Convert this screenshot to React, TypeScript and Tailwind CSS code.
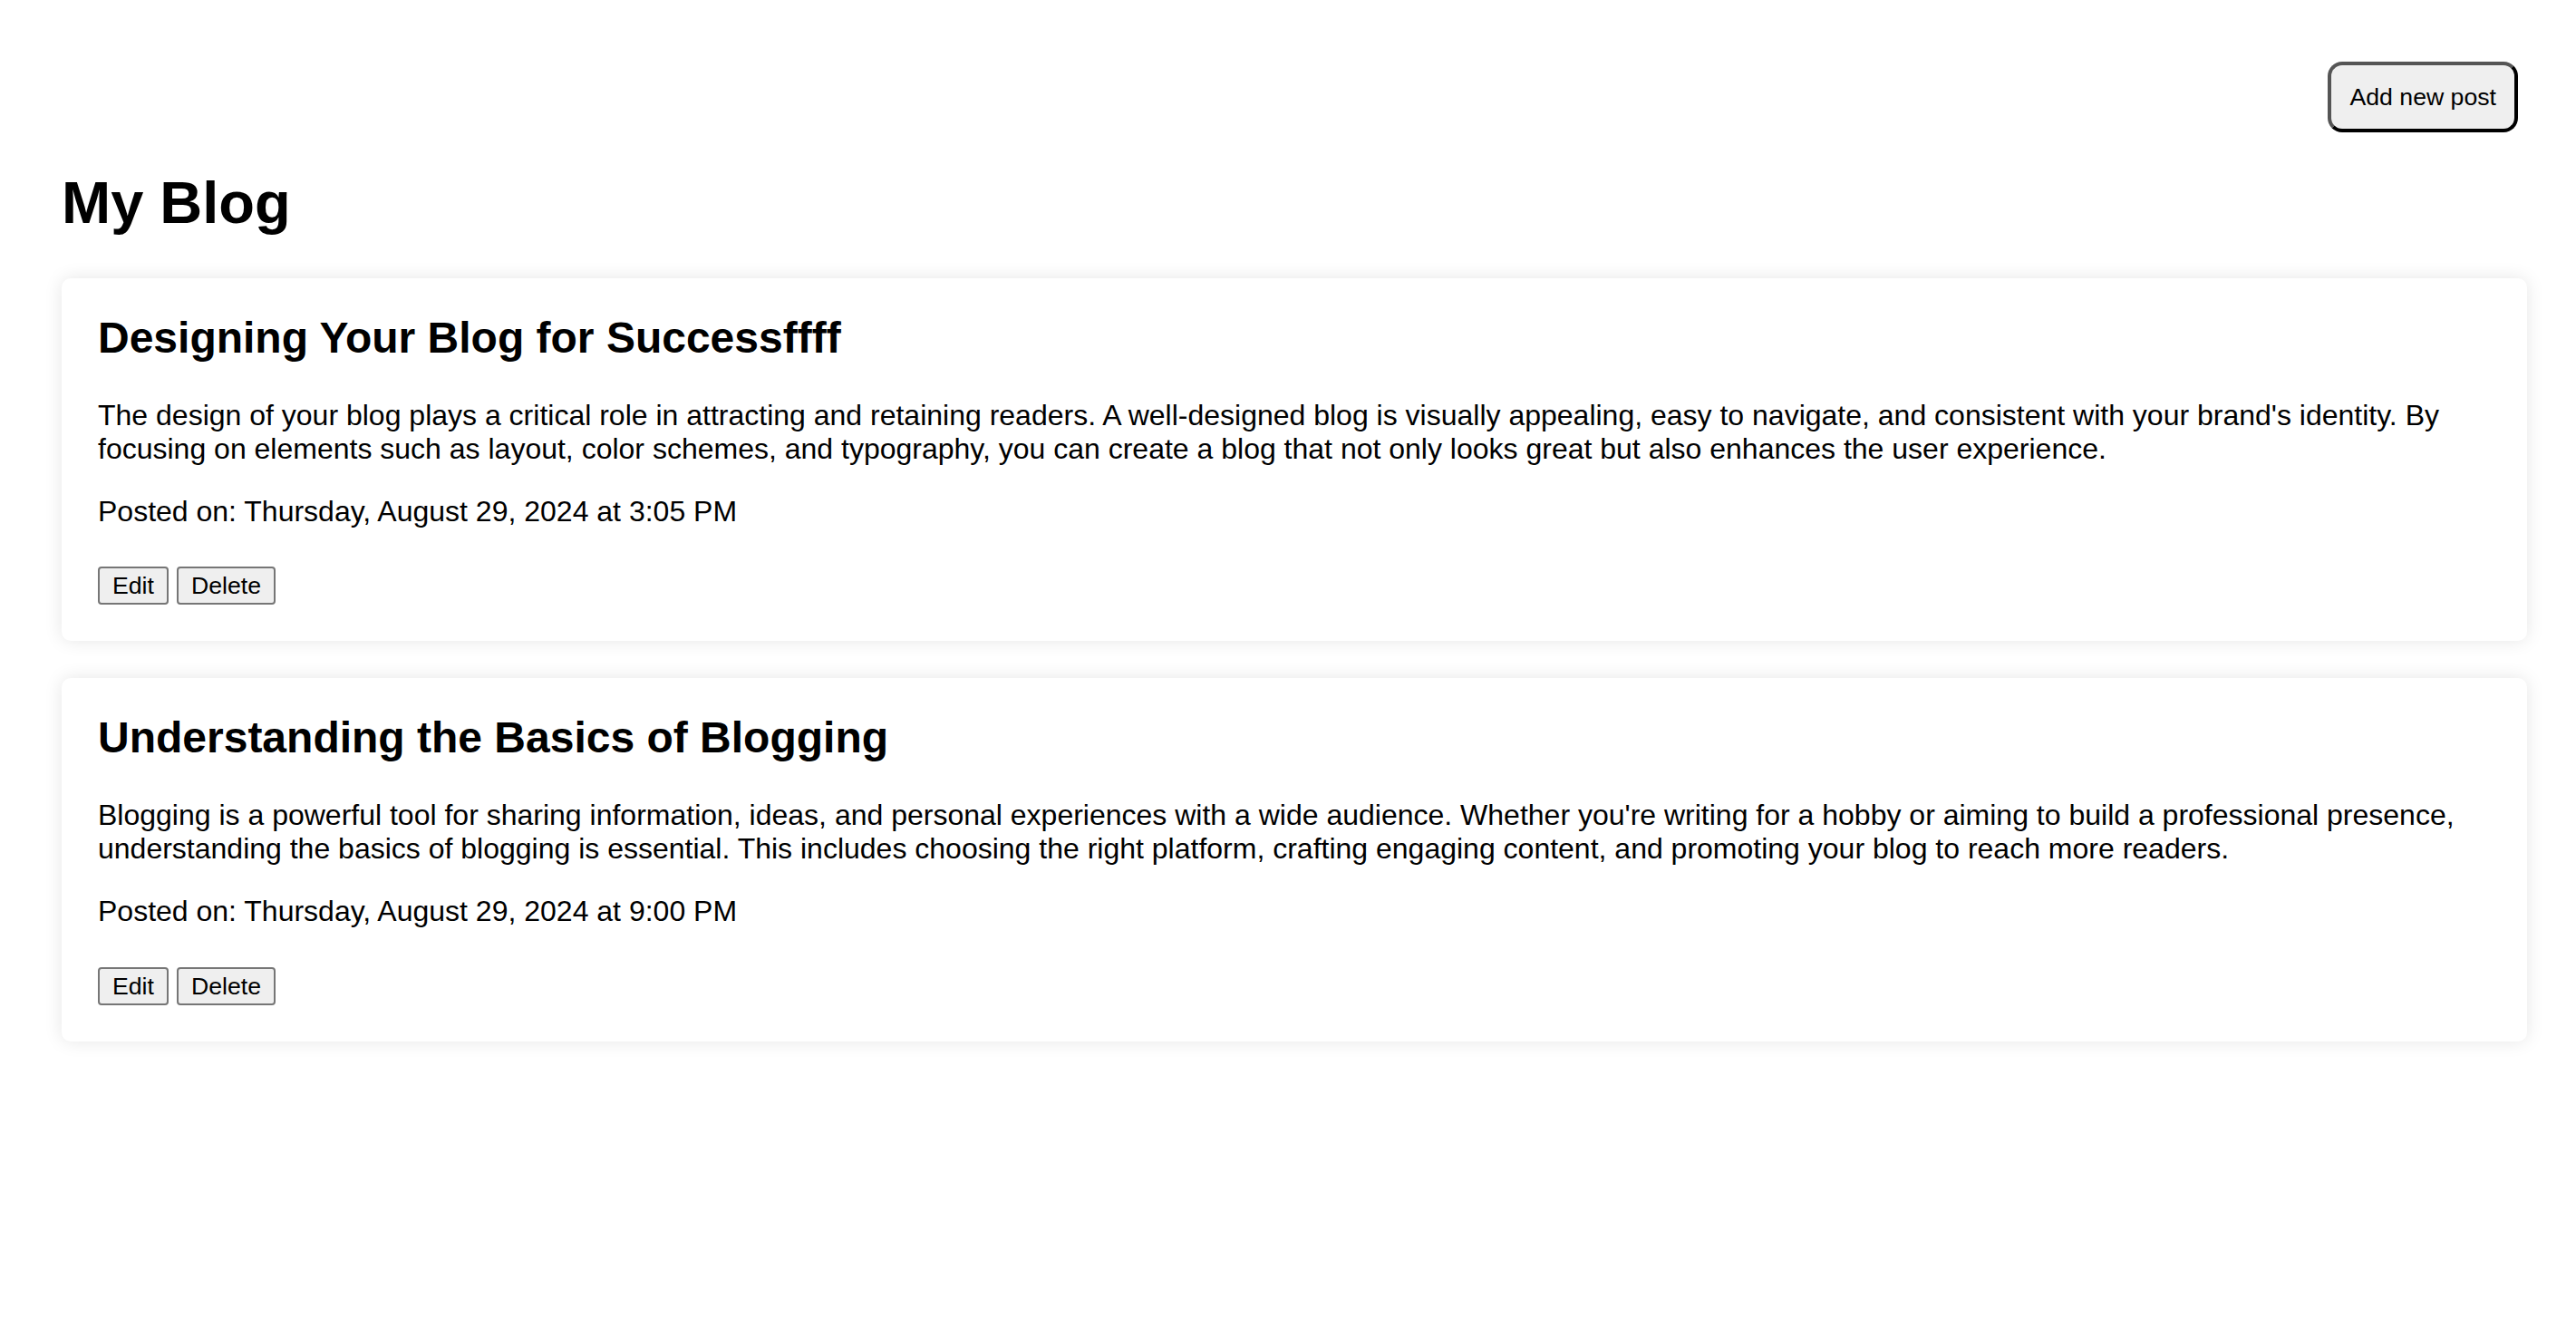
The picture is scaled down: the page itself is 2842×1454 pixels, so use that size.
import React from "react";

type Post = { title: string; body: string; date: string };

const posts: Post[] = [
  {
    title: "Designing Your Blog for Successffff",
    body: "The design of your blog plays a critical role in attracting and retaining readers. A well-designed blog is visually appealing, easy to navigate, and consistent with your brand's identity. By focusing on elements such as layout, color schemes, and typography, you can create a blog that not only looks great but also enhances the user experience.",
    date: "Thursday, August 29, 2024 at 3:05 PM",
  },
  {
    title: "Understanding the Basics of Blogging",
    body: "Blogging is a powerful tool for sharing information, ideas, and personal experiences with a wide audience. Whether you're writing for a hobby or aiming to build a professional presence, understanding the basics of blogging is essential. This includes choosing the right platform, crafting engaging content, and promoting your blog to reach more readers.",
    date: "Thursday, August 29, 2024 at 9:00 PM",
  },
];

function SmallButton({ children }: { children: React.ReactNode }) {
  return (
    <button className="h-[42px] px-[14px] border-2 border-solid border-[#767676] rounded-[4px] bg-[#efefef] text-[26.67px] leading-[30px] text-black">
      {children}
    </button>
  );
}

export default function App() {
  return (
    <div
      className="min-h-screen bg-white text-black pl-[68px] pr-[54px] pb-[100px]"
      style={{ fontFamily: '"Liberation Sans", Arial, sans-serif' }}
    >
      <div className="flex justify-end pt-[68px] pr-[10px]">
        <button className="h-[78px] px-[20px] border-4 border-solid border-t-[#555555] border-l-[#555555] border-r-black border-b-black rounded-[16px] bg-[#efefef] text-[26.67px] leading-[30px] text-black">
          Add new post
        </button>
      </div>
      <h1 className="mt-[41px] mb-[46px] text-[65px] leading-[74px] font-bold">My Blog</h1>
      <div className="flex flex-col gap-[41px]">
        {posts.map((p) => (
          <div
            key={p.title}
            className="bg-white rounded-[10px] shadow-[0_0_20px_rgba(0,0,0,0.1)] px-[40px] pt-[38px] pb-[40px]"
          >
            <h2 className="text-[48px] leading-[55px] font-bold">{p.title}</h2>
            <p className="mt-[40px] text-[32px] leading-[36.8px]">{p.body}</p>
            <p className="mt-[32px] text-[32px] leading-[36.8px]">Posted on: {p.date}</p>
            <div className="mt-[43px] flex gap-[9px]">
              <SmallButton>Edit</SmallButton>
              <SmallButton>Delete</SmallButton>
            </div>
          </div>
        ))}
      </div>
    </div>
  );
}
